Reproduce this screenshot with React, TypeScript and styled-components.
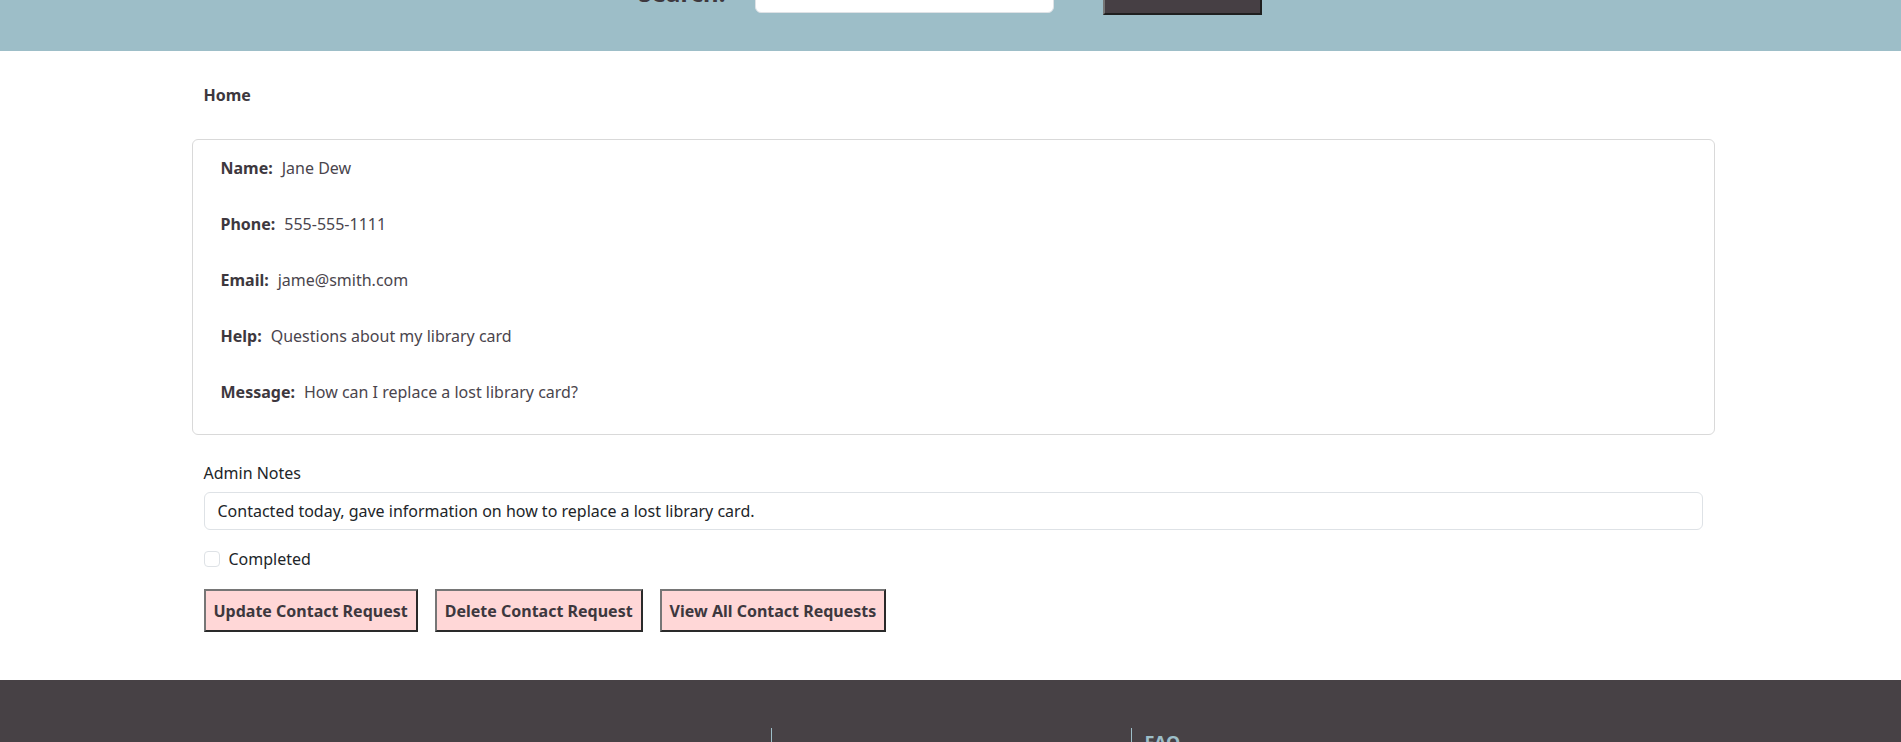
import styled, { createGlobalStyle } from "styled-components";

const GlobalStyle = createGlobalStyle`
  html, body {
    margin: 0;
    padding: 0;
    overflow: hidden;
    background: #ffffff;
  }
  body {
    font-family: "Noto Sans", "Open Sans", sans-serif;
    font-size: 16px;
    color: #212529;
  }
  * { box-sizing: border-box; }
`;

const Header = styled.header`
  margin-top: -49px;
  height: 100px;
  background: #9dbec8;
  display: flex;
  justify-content: center;
  align-items: flex-end;
  padding-bottom: 37px;
`;

const SearchLabel = styled.label`
  font-size: 24px;
  font-weight: bold;
  color: #3d383e;
  margin-right: 30px;
  margin-bottom: 9px;
  line-height: 1;
`;

const SearchInput = styled.input`
  width: 299px;
  height: 38px;
  border: 1px solid #dee2e6;
  border-radius: 6px;
  background: #fff;
  margin-right: 49px;
  margin-bottom: 1px;
`;

const SearchButton = styled.button`
  width: 159px;
  height: 44px;
  background: #463f44;
  border: 2px solid;
  border-color: #767676 #1f1f1f #1f1f1f #767676;
  margin-bottom: -1px;
`;

const Main = styled.main`
  width: 1523px;
  max-width: 100%;
  margin-left: max(0px, calc(50% - 759px));
  padding: 32px 0 48px;
`;

const Crumb = styled.div`
  padding: 0 12px;
  font-size: 16px;
  font-weight: bold;
  color: #3d383e;
  line-height: 24px;
  margin-bottom: 32px;
`;

const Card = styled.section`
  border: 1px solid #d9d9d9;
  border-radius: 6px;
  padding: 16px 28px 14px;
`;

const Row = styled.p`
  margin: 0 0 32px;
  font-size: 16px;
  line-height: 24px;
  color: #4a454d;
  &:last-child { margin-bottom: 16px; }
`;

const Key = styled.strong`
  color: #3d383e;
  margin-right: 9px;
`;

const Form = styled.div`
  padding: 26px 12px 0;
`;

const FieldLabel = styled.label`
  display: block;
  font-size: 16px;
  line-height: 24px;
  margin-bottom: 7px;
  color: #212529;
`;

const NotesInput = styled.input`
  display: block;
  width: 100%;
  height: 38px;
  padding: 6px 13px;
  font-family: "Noto Sans", "Open Sans", sans-serif;
  font-size: 16px;
  color: #212529;
  border: 1px solid #dee2e6;
  border-radius: 6px;
  background: #fff;
`;

const CheckRow = styled.label`
  display: flex;
  align-items: center;
  gap: 9px;
  margin-top: 17px;
  font-size: 16px;
  line-height: 24px;
  color: #212529;
`;

const Box = styled.span`
  width: 16px;
  height: 16px;
  border: 1px solid #dee2e6;
  border-radius: 4px;
  background: #fff;
`;

const Actions = styled.div`
  display: flex;
  gap: 17px;
  margin-top: 18px;
`;

const ActionButton = styled.button`
  height: 43px;
  padding: 0 8px;
  background: #ffd7d7;
  font-family: "Noto Sans", "Open Sans", sans-serif;
  font-size: 16px;
  font-weight: bold;
  color: #3d383e;
  border: 2px solid;
  border-color: #767676 #2a2a2a #2a2a2a #767676;
`;

const Footer = styled.footer`
  background: #474145;
  height: 200px;
  padding-top: 48px;
  display: flex;
  justify-content: center;
`;

const FooterCol = styled.div<{ $line?: boolean }>`
  width: 360px;
  border-left: ${(p) => (p.$line ? "1px solid #9dbec8" : "none")};
  padding-left: 13px;
`;

const FooterLink = styled.a`
  display: block;
  margin-top: 2px;
  color: #9dbec8;
  font-size: 18px;
  font-weight: bold;
  text-decoration: underline;
`;

const details = [
  ["Name:", "Jane Dew"],
  ["Phone:", "555-555-1111"],
  ["Email:", "jame@smith.com"],
  ["Help:", "Questions about my library card"],
  ["Message:", "How can I replace a lost library card?"],
];

export default function App() {
  return (
    <>
      <GlobalStyle />
      <Header>
        <SearchLabel>Search:</SearchLabel>
        <SearchInput />
        <SearchButton />
      </Header>
      <Main>
        <Crumb>Home</Crumb>
        <Card>
          {details.map(([k, v]) => (
            <Row key={k}>
              <Key>{k}</Key>
              {v}
            </Row>
          ))}
        </Card>
        <Form>
          <FieldLabel>Admin Notes</FieldLabel>
          <NotesInput defaultValue="Contacted today, gave information on how to replace a lost library card." />
          <CheckRow>
            <Box />
            Completed
          </CheckRow>
          <Actions>
            <ActionButton>Update Contact Request</ActionButton>
            <ActionButton>Delete Contact Request</ActionButton>
            <ActionButton>View All Contact Requests</ActionButton>
          </Actions>
        </Form>
      </Main>
      <Footer>
        <FooterCol />
        <FooterCol $line />
        <FooterCol $line>
          <FooterLink>FAQ</FooterLink>
        </FooterCol>
      </Footer>
    </>
  );
}
